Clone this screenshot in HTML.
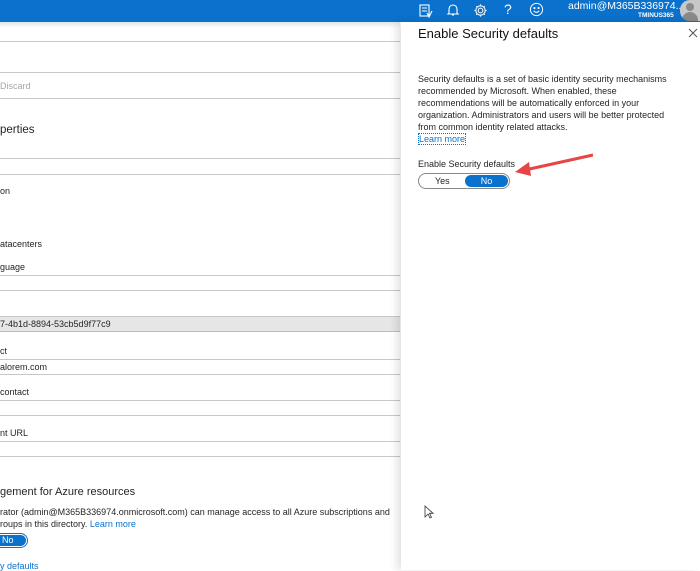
<!DOCTYPE html>
<html><head><style>
*{margin:0;padding:0;box-sizing:border-box}
body{width:700px;height:570px;overflow:hidden;position:relative;background:#fff;font-family:"Liberation Sans",sans-serif;color:#252525;font-size:9px}
.t{position:absolute;white-space:nowrap}
.l{position:absolute;left:0;width:400px;height:1px;background:#c8c8c8}
#top{position:absolute;left:0;top:0;width:700px;height:22px;background:#0a72cc}
#panel{position:absolute;left:401px;top:22px;width:299px;height:548px;background:#fff;box-shadow:-4px 0 8px rgba(0,0,0,.12)}
</style></head><body>
<div id="top">
<svg class="t" style="left:418px;top:3px" width="16" height="16" viewBox="0 0 16 16" fill="none" stroke="#fff" stroke-width="1.1"><rect x="2" y="2" width="9" height="11"/><path d="M4 5h5M4 8h5M9 10l2 4 3-6"/></svg>
<svg class="t" style="left:446px;top:3px" width="14" height="14" viewBox="0 0 14 14" fill="none" stroke="#fff" stroke-width="1.1"><path d="M3 10V6a4 4 0 0 1 8 0v4l1 1H2z M6 12h2"/></svg>
<svg class="t" style="left:473px;top:3px" width="15" height="15" viewBox="0 0 16 16" fill="none" stroke="#fff" stroke-width="1.1"><circle cx="8" cy="8" r="2.5"/><path d="M8 1.5v2M8 12.5v2M1.5 8h2M12.5 8h2M3.4 3.4l1.4 1.4M11.2 11.2l1.4 1.4M3.4 12.6l1.4-1.4M11.2 4.8l1.4-1.4"/><circle cx="8" cy="8" r="5"/></svg>
<div class="t" style="left:504px;top:1px;color:#fff;font-size:14px">?</div>
<svg class="t" style="left:529px;top:2px" width="15" height="15" viewBox="0 0 16 16" fill="none" stroke="#fff" stroke-width="1.1"><circle cx="8" cy="8" r="6.5"/><circle cx="5.8" cy="6.5" r=".6" fill="#fff"/><circle cx="10.2" cy="6.5" r=".6" fill="#fff"/><path d="M5 9.5q3 3 6 0"/></svg>
<div class="t" style="left:568px;top:0px;color:#fff;font-size:10.5px">admin@M365B336974....</div>
<div class="t" style="left:638px;top:12px;color:#fff;font-size:6.5px;font-weight:bold">TMINUS365</div>
<div class="t" style="left:680px;top:0;width:20px;height:21px;background:#c8c8c8;border-radius:10px 0 0 10px;overflow:hidden">
<div style="position:absolute;left:6px;top:3px;width:8px;height:8px;border-radius:50%;background:#8a8a8a"></div>
<div style="position:absolute;left:2px;top:12px;width:16px;height:12px;border-radius:8px 8px 0 0;background:#8a8a8a"></div></div>
</div>
<div style="position:absolute;left:0;top:22px;width:400px;height:6px;background:linear-gradient(#e4e4e4,#fff)"></div>
<div class="l" style="top:41px"></div>
<div class="l" style="top:72px"></div>
<div class="t" style="left:0;top:81px;color:#a6a6a6">Discard</div>
<div class="l" style="top:98px"></div>
<div class="t" style="left:0;top:124px;font-size:11.5px">perties</div>
<div class="l" style="top:158px"></div>
<div class="l" style="top:174px"></div>
<div class="t" style="left:0;top:186px">on</div>
<div class="t" style="left:0;top:239px">atacenters</div>
<div class="t" style="left:0;top:262px">guage</div>
<div class="l" style="top:275px"></div>
<div class="l" style="top:290px"></div>
<div class="l" style="top:316px"></div>
<div style="position:absolute;left:0;top:317px;width:400px;height:15px;background:#e6e6e6;border-bottom:1px solid #bdbdbd"></div>
<div class="t" style="left:0;top:319px">7-4b1d-8894-53cb5d9f77c9</div>
<div class="t" style="left:0;top:346px">ct</div>
<div class="l" style="top:359px"></div>
<div class="t" style="left:0;top:362px">alorem.com</div>
<div class="l" style="top:374px"></div>
<div class="t" style="left:0;top:387px">contact</div>
<div class="l" style="top:400px"></div>
<div class="l" style="top:415px"></div>
<div class="t" style="left:0;top:428px">nt URL</div>
<div class="l" style="top:441px"></div>
<div class="l" style="top:456px"></div>
<div class="t" style="left:0;top:486px;font-size:11px">gement for Azure resources</div>
<div class="t" style="left:0;top:507px">rator (admin@M365B336974.onmicrosoft.com) can manage access to all Azure subscriptions and</div>
<div class="t" style="left:0;top:519px">roups in this directory. <span style="color:#0a72cc">Learn more</span></div>
<div class="t" style="left:-10px;top:533px;width:38px;height:15px;border-radius:8px;border:1px solid #0a72cc;background:#fff"><div style="position:absolute;left:1px;top:1px;width:34px;height:11px;border-radius:6px;background:#0a72cc;color:#fff;padding-left:10px;line-height:11px">No</div></div>
<div class="t" style="left:0;top:561px;color:#0a72cc">y defaults</div>
<div id="panel">
<div class="t" style="left:17px;top:4px;font-size:13px;color:#111">Enable Security defaults</div>
<svg class="t" style="left:287px;top:6px" width="10" height="10" viewBox="0 0 10 10"><path d="M1 1l8 8M9 1l-8 8" stroke="#555" stroke-width="1"/></svg>
<div class="t" style="left:17px;top:51px;line-height:12px;font-size:9px;white-space:normal;width:262px">Security defaults is a set of basic identity security mechanisms recommended by Microsoft. When enabled, these recommendations will be automatically enforced in your organization. Administrators and users will be better protected from common identity related attacks.<br><span style="color:#0a72cc;border:1px dotted #0a72cc">Learn more</span></div>
<div class="t" style="left:17px;top:137px;font-size:9px">Enable Security defaults</div>
<div class="t" style="left:17px;top:151px;width:92px;height:16px;border:1px solid #888;border-radius:8px">
<div style="position:absolute;left:16px;top:2px">Yes</div>
<div style="position:absolute;left:46px;top:1px;width:43px;height:12px;border-radius:6px;background:#0a72cc;color:#fff;text-align:center;line-height:12px">No</div></div>
<svg class="t" style="left:112px;top:130px" width="82" height="26" viewBox="0 0 82 26"><path d="M80 3L12 18" stroke="#e84545" stroke-width="3"/><path d="M2 20L16 10L18 24Z" fill="#e84545"/></svg>
</div>
<svg class="t" style="left:424px;top:505px" width="10" height="14" viewBox="0 0 10 14"><path d="M1 1v11l3-3 2 4 1.5-.7-2-4H9z" fill="#fff" stroke="#333" stroke-width=".8"/></svg>
</body></html>
